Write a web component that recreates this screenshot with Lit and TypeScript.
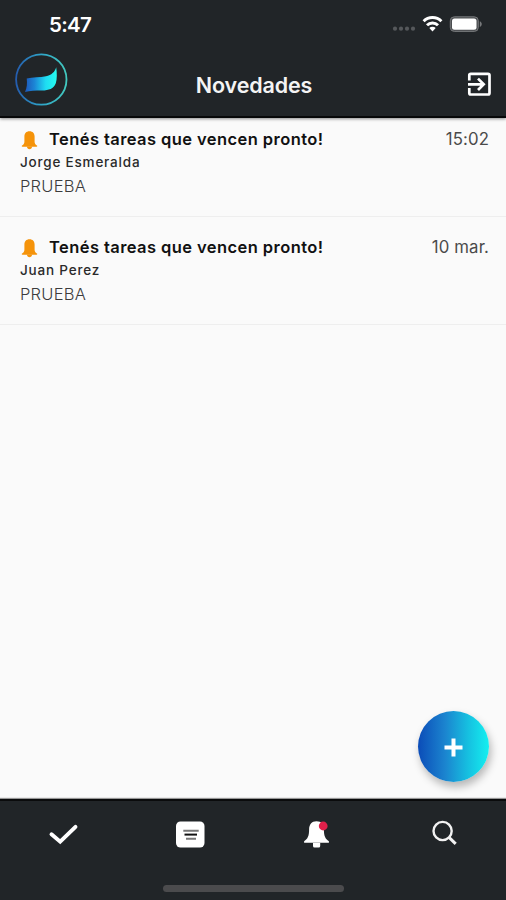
import { LitElement, html, css } from "lit";
import { customElement } from "lit/decorators.js";

interface Notice {
  title: string;
  author: string;
  body: string;
  when: string;
}

const NOTICES: Notice[] = [
  { title: "Tenés tareas que vencen pronto!", author: "Jorge Esmeralda", body: "PRUEBA", when: "15:02" },
  { title: "Tenés tareas que vencen pronto!", author: "Juan Perez", body: "PRUEBA", when: "10 mar." },
];

@customElement("notice-row")
class NoticeRow extends LitElement {
  static properties = { notice: { attribute: false } };
  declare notice: Notice;

  static styles = css`
    :host {
      display: block;
      box-sizing: border-box;
      height: 108px;
      padding: 17px 17px 0 20px;
      border-bottom: 1px solid #eeeeee;
      color: #111;
    }
    .top {
      display: flex;
      align-items: center;
      height: 25px;
    }
    .bell {
      width: 19px;
      height: 20px;
      margin: 3px 10px 0 0;
      flex: none;
    }
    .title {
      flex: 1;
      font-size: 16.5px;
      font-weight: 600;
      letter-spacing: 0.42px;
      white-space: nowrap;
    }
    .when {
      font-size: 16.8px;
      letter-spacing: 0.12px;
      color: #4a4a4a;
      white-space: nowrap;
    }
    .author {
      font-size: 13.5px;
      line-height: 23px;
      font-weight: 500;
      letter-spacing: 0.8px;
      color: #2a2a2a;
    }
    .body {
      font-size: 16.5px;
      line-height: 25px;
      font-weight: 300;
      letter-spacing: 0.25px;
      color: #3c3c3c;
    }
  `;

  render() {
    const n = this.notice;
    return html`
      <div class="top">
        <svg class="bell" viewBox="0 0 19 20">
          <path fill="#f5930a" d="M9.500 1.200C6.200 1.200 4.400 3.400 4.400 6.600v5c0 1.900-.6 2.900-2.300 4-.6.400-.4 1.200.3 1.200h14.200c.7 0 .9-.8.3-1.200-1.700-1.100-2.300-2.100-2.300-4V6.600c0-3.200-1.800-5.400-5.100-5.400z" />
          <path fill="#f5930a" d="M6.900 16.500h5.200c-.2 1.700-1.200 2.700-2.600 2.700s-2.400-1-2.600-2.700z" />
        </svg>
        <span class="title">${n.title}</span>
        <span class="when">${n.when}</span>
      </div>
      <div class="author">${n.author}</div>
      <div class="body">${n.body}</div>
    `;
  }
}

@customElement("app-root")
class AppRoot extends LitElement {
  static styles = css`
    :host {
      display: flex;
      flex-direction: column;
      position: relative;
      box-sizing: border-box;
      width: 506px;
      height: 900px;
      overflow: hidden;
      background: #fafafa;
      font-family: Inter, Roboto, sans-serif;
    }
    .header {
      flex: none;
      box-sizing: border-box;
      height: 118px;
      background: #212528;
      border-bottom: 2px solid #070809;
      box-shadow: 0 1px 3px rgba(0, 0, 0, 0.45);
      color: #fff;
      z-index: 1;
    }
    .status {
      display: flex;
      align-items: center;
      justify-content: space-between;
      height: 48px;
      padding: 0 24px 0 49px;
    }
    .clock {
      font-size: 20.5px;
      font-weight: 600;
      letter-spacing: -0.7px;
    }
    .indicators {
      width: 90px;
      height: 24px;
    }
    .bar {
      display: grid;
      grid-template-columns: 80px 1fr 80px;
      align-items: center;
      height: 62px;
    }
    .logo {
      width: 54px;
      height: 54px;
      margin: 0 0 0 14px;
    }
    .heading {
      margin: 12px 0 0 2px;
      text-align: center;
      font-size: 21.5px;
      font-weight: 600;
      letter-spacing: -0.15px;
      color: #f4f4f4;
    }
    .exit {
      justify-self: end;
      width: 26px;
      height: 26px;
      margin: 10px 14px 0 0;
    }
    .list {
      flex: 1;
      margin-top: -9px;
    }
    .fab {
      position: absolute;
      left: 418px;
      top: 711px;
      width: 71px;
      height: 71px;
      border-radius: 50%;
      background: linear-gradient(90deg, #0b4cb8 0%, #1b84cf 38%, #16bfe0 70%, #14f0f0 100%);
      box-shadow: 2px 5px 9px rgba(0, 0, 0, 0.28);
      display: grid;
      place-items: center;
    }
    .plus {
      width: 21px;
      height: 21px;
      margin-top: 2px;
    }
    .tabs {
      flex: none;
      box-sizing: border-box;
      height: 101px;
      border-top: 2px solid #0a0b0c;
      box-shadow: 0 -1px 1px rgba(0, 0, 0, 0.4);
      background: #212528;
      display: flex;
      flex-direction: column;
      align-items: center;
      justify-content: space-between;
    }
    .row {
      display: grid;
      grid-template-columns: repeat(4, 1fr);
      justify-items: center;
      align-items: center;
      width: 100%;
      height: 66px;
    }
    .icon {
      width: 34px;
      height: 34px;
    }
    .home {
      width: 181px;
      height: 7px;
      margin-bottom: 8px;
      border-radius: 4px;
      background: #4b4b4d;
    }
  `;

  render() {
    return html`
      <header class="header">
        <div class="status">
          <span class="clock">5:47</span>
          <svg class="indicators" viewBox="392 12 90 24">
            <g fill="#55585b">
              <circle cx="395" cy="28.700" r="2.100" />
              <circle cx="401" cy="28.700" r="2.100" />
              <circle cx="407" cy="28.700" r="2.100" />
              <circle cx="413" cy="28.700" r="2.100" />
            </g>
            <g fill="none" stroke="#fff" stroke-width="3">
              <path d="M423.600 21.300a12.600 12.600 0 0 1 17.800 0" />
              <path d="M427 25.200a7.800 7.800 0 0 1 11 0" />
            </g>
            <path fill="#fff" d="M432.500 31.500l-3.200-3.400a4.500 4.500 0 0 1 6.400 0z" />
            <rect x="450.300" y="16.800" width="28" height="14.600" rx="4" fill="#4b4e51" stroke="#77797b" />
            <rect x="452" y="18.400" width="24.500" height="11.300" rx="2.500" fill="#fff" />
            <path d="M479.800 21.200c2.600 1 2.600 4.800 0 5.800z" fill="#77797b" />
          </svg>
        </div>
        <div class="bar">
          <svg class="logo" viewBox="14 52 54 54">
            <defs>
              <linearGradient id="ring" x1="0" x2="1">
                <stop offset="0" stop-color="#245cae" />
                <stop offset="0.500" stop-color="#2fa5c8" />
                <stop offset="1" stop-color="#42c9bf" />
              </linearGradient>
              <linearGradient id="flag" x1="0" x2="1">
                <stop offset="0" stop-color="#1d55b8" />
                <stop offset="0.300" stop-color="#1c86d6" />
                <stop offset="0.650" stop-color="#1fdcf2" />
                <stop offset="1" stop-color="#25fbee" />
              </linearGradient>
            </defs>
            <circle cx="41.300" cy="79.500" r="25.200" fill="none" stroke="url(#ring)" stroke-width="1.800" />
            <path fill="url(#flag)" d="M26.700 78.500C33 77 40 77.700 46 76.300C51.500 75 54.800 72 56.200 67.200C57 73 57.200 79 55.800 83.200C53.500 88.700 49 90.300 42 90.500C35 90.600 30 90.700 25 91.900C27 88 27.300 83 26.700 78.500z" />
          </svg>
          <div class="heading">Novedades</div>
          <svg class="exit" viewBox="466 71 26 26" fill="none" stroke="#fff" stroke-width="2.700">
            <path d="M469.300 80.500V75.300a1.500 1.500 0 0 1 1.500-1.500H488a1.500 1.500 0 0 1 1.500 1.500V93a1.500 1.500 0 0 1-1.500 1.500H470.800a1.500 1.500 0 0 1-1.500-1.500V88" />
            <path d="M468 84.300H483M478 78.600L483.700 84.300L478 90" />
          </svg>
        </div>
      </header>
      <main class="list">
        ${NOTICES.map((n) => html`<notice-row .notice=${n}></notice-row>`)}
      </main>
      <nav class="tabs">
        <div class="row">
          <svg class="icon" viewBox="46 817 34 34">
            <path d="M51.500 834.200L60.200 841.700L75.500 826.800" fill="none" stroke="#fff" stroke-width="3.900" stroke-linecap="round" />
          </svg>
          <svg class="icon" viewBox="173 817 34 34">
            <rect x="176" y="821.500" width="28.500" height="26" rx="4.500" fill="#fff" />
            <path d="M183.300 830.700H198.700M186 838.700H196" stroke="#777" stroke-width="2" />
            <path d="M184.500 834.600H197" stroke="#111" stroke-width="2" />
          </svg>
          <svg class="icon" viewBox="299.500 817 34 34">
            <path fill="#fff" d="M317 821.300c-4.900 0-7.400 3.400-7.400 8.200 0 6.400-1.300 9.300-5 11.800v1.500h24.800v-1.500c-3.700-2.500-5-5.400-5-11.800 0-4.800-2.500-8.200-7.400-8.200zM313.500 842.600h7.200v3.500a1.500 1.500 0 0 1-1.500 1.500h-4.200a1.500 1.500 0 0 1-1.500-1.500z" />
            <circle cx="323.700" cy="826" r="4.400" fill="#e0204a" />
          </svg>
          <svg class="icon" viewBox="426 817 34 34" fill="none" stroke="#f2f2f2">
            <circle cx="442.600" cy="831" r="9.100" stroke-width="2.400" />
            <path d="M449 837.400L455.700 843.800" stroke-width="3" />
          </svg>
        </div>
        <div class="home"></div>
      </nav>
      <div class="fab">
        <svg class="plus" viewBox="0 0 21 21">
          <path d="M10.500 1.500V19.500M1.500 10.500H19.500" stroke="#fff" stroke-width="4" />
        </svg>
      </div>
    `;
  }
}
